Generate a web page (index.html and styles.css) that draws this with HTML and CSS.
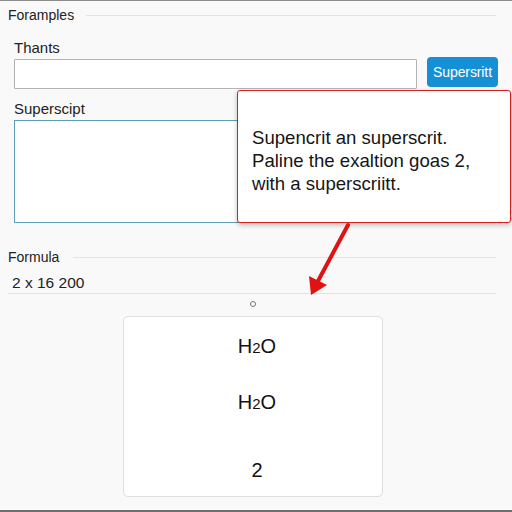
FILE: index.html
```html
<!DOCTYPE html>
<html>
<head>
<meta charset="utf-8">
<link rel="stylesheet" href="styles.css">
</head>
<body>
<div class="page">
  <div class="section-head head-top">
    <span class="section-title">Foramples</span>
    <span class="rule"></span>
  </div>
  <div class="form">
    <label class="label label-first">Thants</label>
    <div class="input-row">
      <input class="text-input" type="text">
      <button class="btn">Supersritt</button>
    </div>
    <label class="label label-second">Superscipt</label>
    <textarea class="area"></textarea>
  </div>
  <div class="section-head head-formula">
    <span class="section-title">Formula</span>
    <span class="rule"></span>
  </div>
  <div class="formula-row">2 x 16 200</div>
  <div class="dot-row"><span class="dot"></span></div>
  <div class="card">
    <div class="chem chem-1">H<span class="small">2</span>O</div>
    <div class="chem chem-2">H<span class="small">2</span>O</div>
    <div class="chem chem-3">2</div>
  </div>

  <div class="popup">
    <p class="popup-text">Supencrit an superscrit.<br>Paline the exaltion goas 2,<br>with a superscriitt.</p>
  </div>
  <svg class="arrow" width="512" height="512" viewBox="0 0 512 512">
    <line x1="348" y1="225" x2="318" y2="281" stroke="#e01212" stroke-width="4" stroke-linecap="round"/>
    <polygon points="311,295 309,276 327,285" fill="#e01212"/>
  </svg>
</div>
</body>
</html>
```

FILE: styles.css
```css
* { box-sizing: border-box; }
html, body { margin: 0; padding: 0; }
body {
  font-family: "Liberation Sans", Arial, sans-serif;
  color: #1a1a1a;
  background: #f8f8f8;
}
.page {
  position: relative;
  width: 512px;
  height: 512px;
  border-top: 1px solid #8c8c8c;
  border-bottom: 2px solid #6f6f6f;
  background: #f9f9f9;
  overflow: hidden;
}
.section-head {
  display: flex;
  align-items: center;
  padding: 0 16px 0 8px;
  height: 16px;
}
.head-top { margin-top: 6px; }
.head-formula { margin-top: 26px; }
.section-title {
  font-size: 14px;
  line-height: 16px;
  color: #222;
}
.rule {
  flex: 1;
  height: 1px;
  background: #e3e3e3;
  margin-left: 12px;
}
.head-formula .rule { margin-left: 14px; }
.form {
  display: flex;
  flex-direction: column;
  padding-left: 14px;
}
.label {
  font-size: 15px;
  line-height: 18px;
  color: #222;
}
.label-first { margin-top: 16px; }
.label-second { margin-top: 11px; }
.input-row {
  display: flex;
  align-items: flex-start;
  gap: 10px;
  margin-top: 2px;
}
.text-input {
  width: 403px;
  height: 30px;
  border: 1px solid #b4b4b4;
  background: #fff;
  margin: 0;
  padding: 0 6px;
  border-radius: 1px;
}
.btn {
  width: 71px;
  height: 30px;
  margin-top: -2px;
  border: none;
  border-radius: 4px;
  background: #1690d4;
  color: #fff;
  font-family: "Liberation Sans", Arial, sans-serif;
  font-size: 14px;
  padding: 0;
  letter-spacing: -0.1px;
}
.area {
  width: 403px;
  height: 103px;
  margin-top: 2px;
  border: 1px solid #5e9fb7;
  background: #fff;
  resize: none;
  display: block;
}
.formula-row {
  margin: 9px 16px 0 8px;
  padding: 0 0 1px 4px;
  font-size: 15.5px;
  line-height: 18px;
  border-bottom: 1px solid #e3e3e3;
  color: #222;
}
.dot-row {
  display: flex;
  justify-content: center;
  margin-top: 7px;
  padding-right: 6px;
}
.dot {
  width: 6px;
  height: 6px;
  border: 1px solid #777;
  border-radius: 50%;
}
.card {
  width: 260px;
  height: 181px;
  margin: 9px 0 0 123px;
  border: 1px solid #dedede;
  border-radius: 5px;
  background: #fff;
  display: flex;
  flex-direction: column;
  align-items: center;
  padding-left: 8px;
}
.chem {
  font-size: 20px;
  line-height: 24px;
  color: #111;
}
.chem-1 { margin-top: 17px; }
.chem-2 { margin-top: 30px; }
.chem-3 { margin-top: 42px; }
.small { font-size: 15px; }
.popup {
  position: absolute;
  left: 237px;
  top: 89px;
  width: 274px;
  height: 133px;
  border: 1.5px solid #d42222;
  border-radius: 3px;
  background: #fff;
  box-shadow: 0 2px 5px rgba(0,0,0,0.25);
  padding: 35px 0 0 14px;
}
.popup-text {
  margin: 0;
  font-size: 18.6px;
  line-height: 23px;
  color: #151515;
}
.arrow {
  position: absolute;
  left: 0;
  top: -1px;
  pointer-events: none;
}
```
